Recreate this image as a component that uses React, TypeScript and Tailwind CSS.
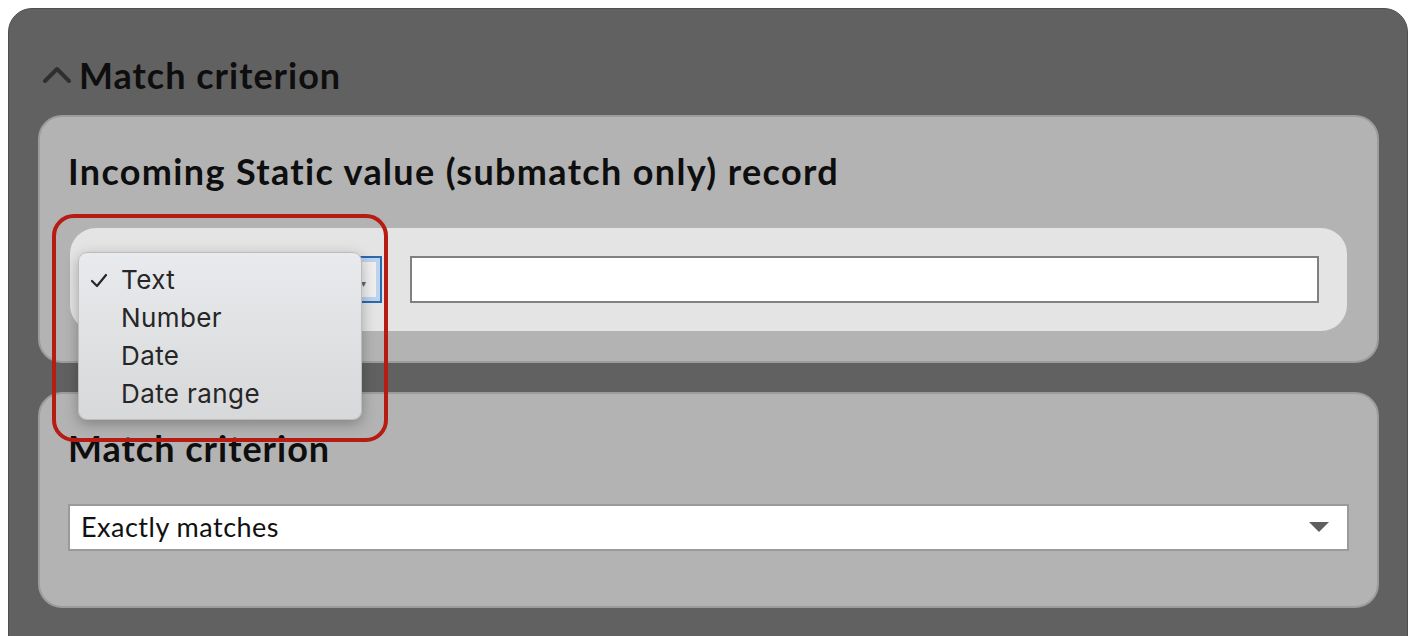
import React from "react";

const bold = { fontFamily: "Lato, 'Noto Sans', sans-serif" };

export default function App() {
  return (
    <div className="w-[1418px] h-[636px] overflow-hidden bg-white pt-2 pl-2 pr-[10px]" style={bold}>
      <div className="relative h-[720px] rounded-[24px] bg-[#616161] border border-[#4f4f4f] pl-[29px] pr-[28px]">
        {/* header */}
        <div className="h-[106px] flex items-center pt-[25px]">
          <svg width="30" height="20" viewBox="0 0 30 20" className="ml-[4px] mr-[7px]">
            <polyline points="3,16 15,4 27,16" fill="none" stroke="#2f2f2f" strokeWidth="4" strokeLinecap="round" strokeLinejoin="round" />
          </svg>
          <span className="text-[36px] leading-[40px] tracking-[1px] font-bold text-[#0e0e0e]">Match criterion</span>
        </div>

        {/* card 1 */}
        <div className="h-[248px] rounded-[24px] bg-[#b3b3b3] border-2 border-[#9c9c9c] px-[28px] pt-[34px]">
          <div className="text-[36px] leading-[40px] tracking-[1.35px] font-bold text-[#0e0e0e]">
            Incoming Static value (submatch only) record
          </div>
          <div className="mt-[37px] mx-[2px] h-[103px] rounded-[26px] bg-[#e4e4e4] flex items-center px-[28px] gap-[28px]">
            <div className="relative w-[284px] h-[47px] border-2 border-[#2b68b1] shadow-[inset_0_0_0_4px_#bcd3ec] bg-[#efefef]">
              <span className="absolute right-[14px] top-[18px] text-[10px] text-[#666]">▾</span>
            </div>
            <div className="flex-1 h-[47px] border-2 border-[#808080] bg-white" />
          </div>
        </div>

        {/* card 2 */}
        <div className="mt-[29px] h-[216px] rounded-[24px] bg-[#b3b3b3] border-2 border-[#9c9c9c] px-[28px] pt-[34px]">
          <div className="text-[36px] leading-[40px] tracking-[1px] font-bold text-[#0e0e0e]">Match criterion</div>
          <div className="mt-[36px] h-[47px] border-2 border-[#9a9a9a] bg-white flex items-center pl-[11px] pr-[18px]">
            <span className="flex-1 text-[27px] tracking-[0.5px] text-[#111]">Exactly matches</span>
            <svg width="20" height="11" viewBox="0 0 20 11">
              <polygon points="0,0 20,0 10,10" fill="#5f5f5f" />
            </svg>
          </div>
        </div>

        {/* red highlight */}
        <div className="absolute left-[43px] top-[205px] w-[336px] h-[228px] rounded-[22px] border-[4px] border-[#b71c13]" />

        {/* menu */}
        <div
          className="absolute left-[69px] top-[243px] w-[284px] h-[168px] rounded-[9px] border border-[#bdbdbd] bg-gradient-to-b from-[#e8eaed] to-[#d7d8d9] shadow-[0_4px_14px_rgba(0,0,0,0.28)] py-[8px] text-[26px] leading-[38px] tracking-[0.4px] text-[#262626]"
          style={{ fontFamily: "Inter, 'Noto Sans', sans-serif" }}
        >
          <div className="relative pl-[42px]">
            <svg width="18" height="15" viewBox="0 0 18 15" className="absolute left-[11px] top-[12px]">
              <polyline points="2,8 7,13 16,2" fill="none" stroke="#262626" strokeWidth="2.2" strokeLinecap="round" strokeLinejoin="round" />
            </svg>
            Text
          </div>
          <div className="pl-[42px]">Number</div>
          <div className="pl-[42px]">Date</div>
          <div className="pl-[42px]">Date range</div>
        </div>
      </div>
    </div>
  );
}
